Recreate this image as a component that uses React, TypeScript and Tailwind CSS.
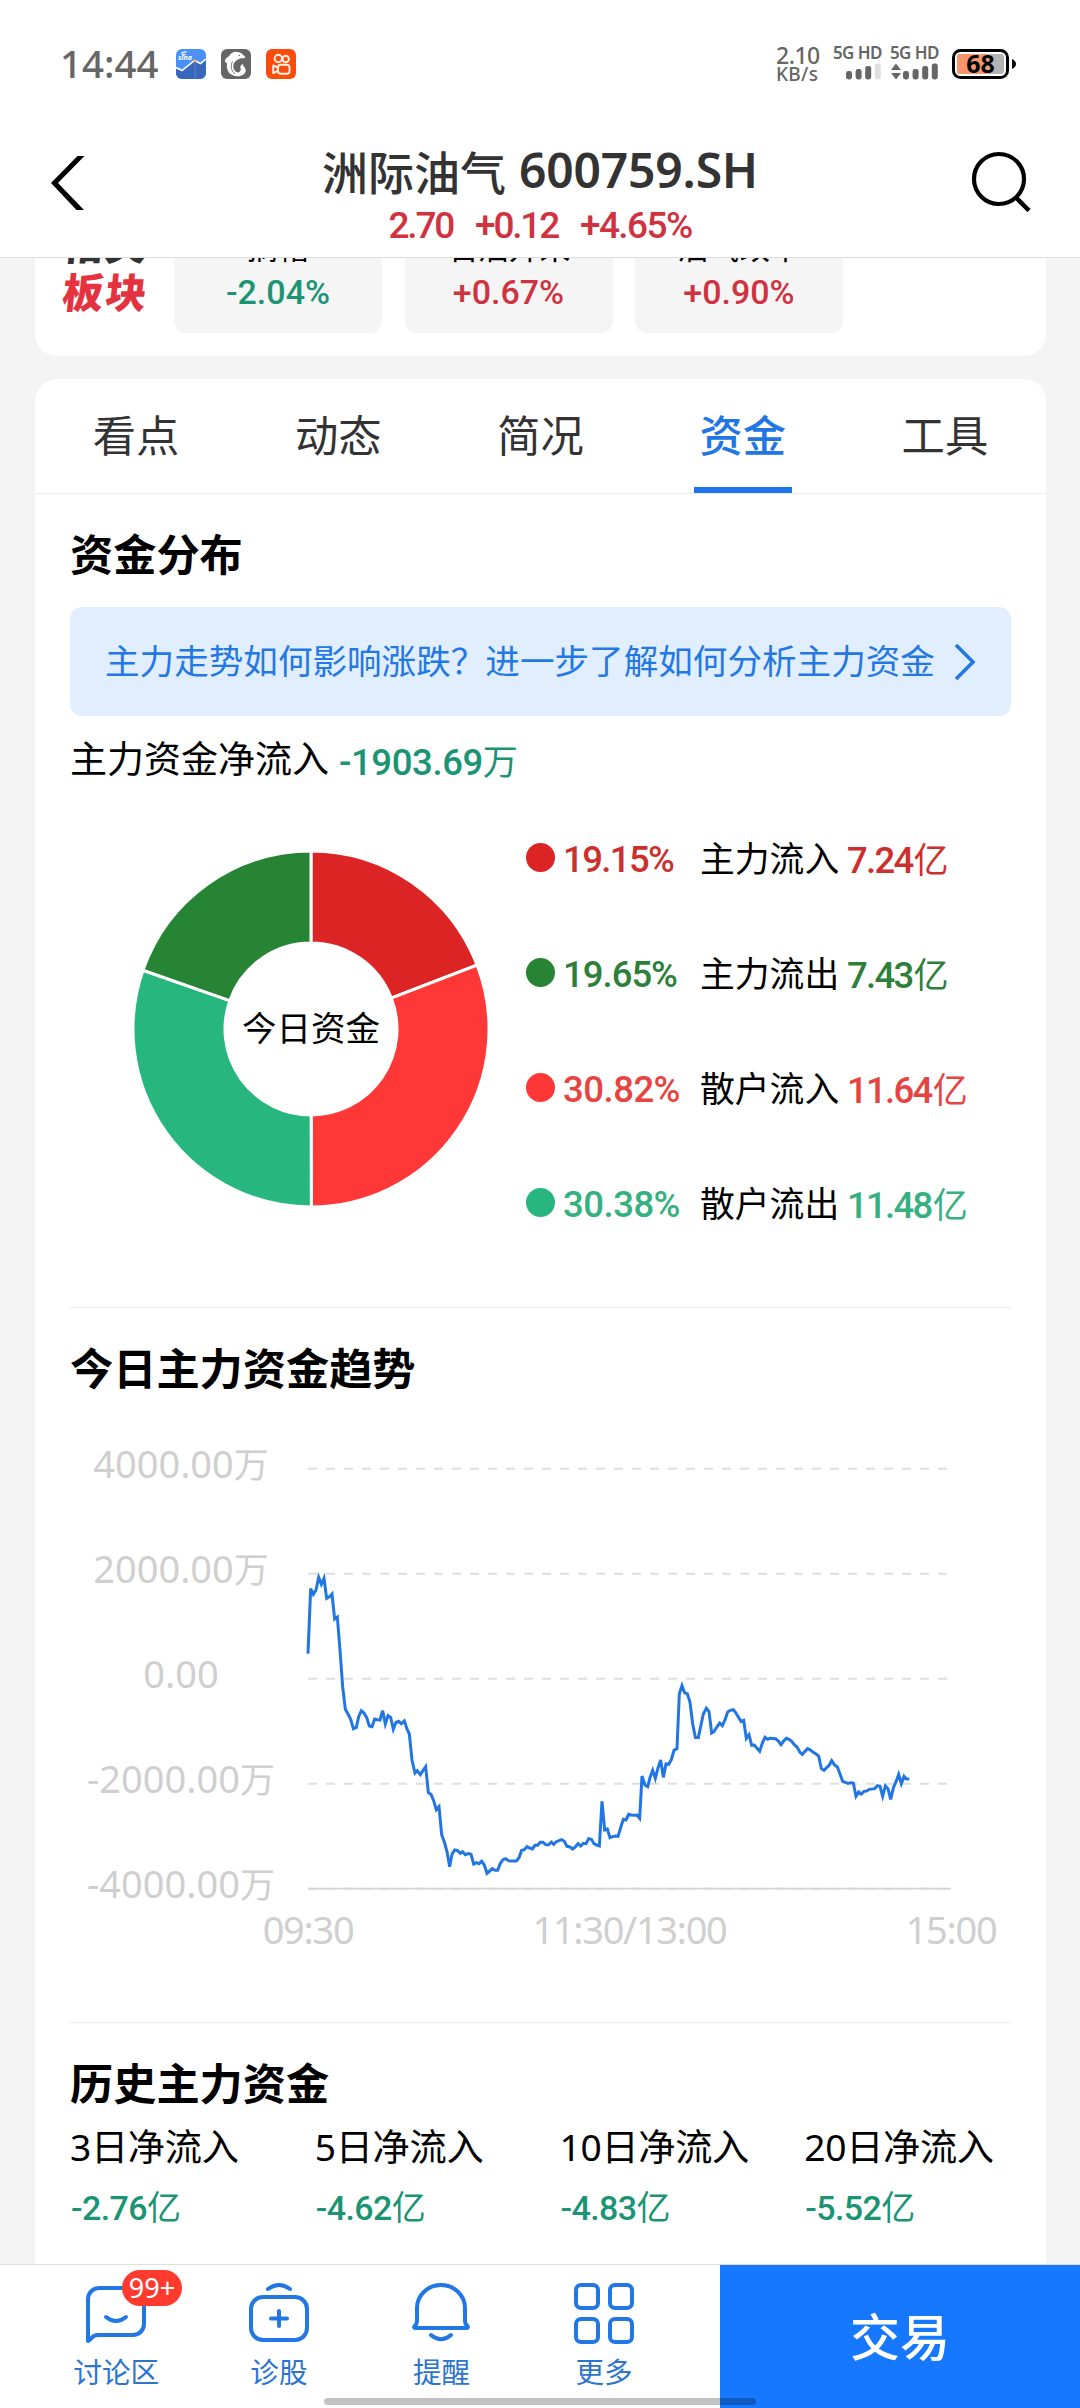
import React from "react";

const CJK = "font-['Noto_Sans_CJK_SC',sans-serif]";
const LATIN = "font-['Noto_Sans','Noto_Sans_CJK_SC',sans-serif]";
const NUM = "font-['Roboto','Noto_Sans_CJK_SC',sans-serif] font-medium";

function SinaIcon() {
  return (
    <svg width="30" height="30" viewBox="0 0 30 30">
      <rect width="30" height="30" rx="6" fill="#4b8ff8" />
      <path d="M0 18.500L6 21.500L18.500 11.500L24.500 14.500L30 10V24a6 6 0 0 1-6 6H6a6 6 0 0 1-6-6Z" fill="#3868bd" />
      <path d="M0 18.500L6 21.500L18.500 11.500L24.500 14.500L30 10" fill="none" stroke="#fff" strokeWidth="1.600" />
      <path d="M19 0V30" stroke="#6f8fd0" strokeWidth="0.700" />
      <circle cx="19" cy="11.500" r="1.400" fill="#f3a04a" />
      <path d="M5.500 4.500q1.500-2 5-1.500M6 6.200q2-1.800 3.500 0" fill="none" stroke="#fff" strokeWidth="1.300" />
      <text x="2" y="10.500" fontSize="7" fontStyle="italic" fontWeight="700" fill="#fff" fontFamily="Noto Sans">sina</text>
    </svg>
  );
}

function DolphinIcon() {
  return (
    <svg width="30" height="30" viewBox="0 0 30 30">
      <rect width="30" height="30" rx="6" fill="#666" />
      <path d="M3.800 12.500C4 9 7 8.500 8.500 6.500C10.500 3.200 14.500 2 18 3.300C21 4 21.500 6 24.300 7.600C24.500 9.300 22 9.500 19.500 9.300C17 10.500 13.500 12 12.500 15.500C11.700 19 13.500 22.500 16.500 23.500C18.500 23.500 19.500 22 20 20.500C18.500 18.500 19.500 16.500 21.500 14.800C21.500 17 24.800 18.500 24.800 21.500C24 26 19.500 27.600 15.500 27.300C8.500 26.300 5 21.500 6 14.500Z" fill="#fff" />
      <path d="M11.500 12.500C9.300 17 10 21.500 14 25" fill="none" stroke="#666" strokeWidth="0.900" />
      <circle cx="18.500" cy="6.500" r="0.700" fill="#666" />
    </svg>
  );
}

function KuaishouIcon() {
  return (
    <svg width="30" height="30" viewBox="0 0 30 30" fill="none" stroke="#fff1e6" strokeWidth="1.900">
      <rect width="30" height="30" rx="6" fill="#fb4c0c" stroke="none" />
      <circle cx="12.300" cy="9.500" r="3.700" />
      <circle cx="19.700" cy="10" r="3.200" />
      <rect x="12" y="15.800" width="11.500" height="9" rx="2.800" />
      <path d="M12 18.500L7.200 16.500V24L12 22Z" strokeLinejoin="round" />
    </svg>
  );
}

function Signal({ x, faded }: { x: number; faded?: boolean }) {
  const tops = [8, 6, 3, 0.500];
  return (
    <>
      {tops.map((t, i) => (
        <rect key={i} x={x + i * 9.600} y={t} width="6" height={16.500 - t} rx="2.400" fill={faded && i === 3 ? "#e0e0e0" : "#666"} />
      ))}
    </>
  );
}

function StatusBar() {
  return (
    <div className="flex h-[128px] items-start justify-between pl-[60px] pr-[64px] pt-[38px] text-[#666]">
      <div className="flex">
        <div className={`${LATIN} w-[116px] text-[38.5px] font-medium leading-[50px]`}>14:44</div>
        <div className="flex gap-[15px] pt-[11px]">
          <SinaIcon />
          <DolphinIcon />
          <KuaishouIcon />
        </div>
      </div>
      <div className="flex">
        <div className={`${LATIN} mr-[13px] mt-[7px] w-[44px] font-medium`}>
          <div className="text-[23px] leading-[20px] tracking-[-0.5px]">2.10</div>
          <div className="text-[19px] leading-[19px] tracking-[0.3px]">KB/s</div>
        </div>
        <div className="mr-[9px] w-[48px] pt-[7px]">
          <div className={`${LATIN} whitespace-nowrap text-[17px] font-semibold leading-[16px] tracking-[-0.6px]`}>5G HD</div>
          <svg className="mt-[2px]" width="48" height="17" viewBox="0 0 48 17"><Signal x={13} faded /></svg>
        </div>
        <div className="mr-[14px] w-[48px] pt-[7px]">
          <div className={`${LATIN} whitespace-nowrap text-[17px] font-semibold leading-[16px] tracking-[-0.6px]`}>5G HD</div>
          <svg className="mt-[2px]" width="48" height="17" viewBox="0 0 48 17">
            <path d="M1 7L6 0.500L11 7ZM1 10L6 16.500L11 10Z" fill="#666" />
            <Signal x={13} />
          </svg>
        </div>
        <div className="relative mt-[11px] h-[30px] w-[64px]">
          <svg width="64" height="30" viewBox="0 0 64 30">
            <rect x="1.500" y="1.500" width="54" height="27" rx="7" fill="#fff" stroke="#000" strokeWidth="3" />
            <rect x="5" y="5" width="47" height="20" rx="3" fill="#b4b4b4" />
            <path d="M8 5H36V25H8a3 3 0 0 1-3-3V8a3 3 0 0 1 3-3Z" fill="#f7966c" />
            <path d="M60 10q4 2 4 5t-4 5Z" fill="#000" />
          </svg>
          <span className={`${LATIN} absolute left-0 top-0 w-[57px] text-center text-[25px] font-bold leading-[29px] text-black`}>68</span>
        </div>
      </div>
    </div>
  );
}

function Header() {
  return (
    <header className="h-[258px] border-b border-[#dcdcdc] bg-white">
      <StatusBar />
      <div className="flex items-start justify-between pl-[50px] pr-[49px]">
        <svg className="mr-[23px] mt-[28px]" width="36" height="54" viewBox="0 0 36 54">
          <path d="M34.500 0H27.500L1 27L26.500 54H34L8 27Z" fill="#000" />
        </svg>
        <div className="mt-[14px] text-center">
          <div className="flex h-[56px] justify-center whitespace-pre text-[#333]">
            <span className={`${CJK} text-[46px] font-medium leading-[56px]`}>洲际油气</span>
            <span className={`${LATIN} ml-[13px] text-[48px] font-semibold leading-[56px] tracking-[-0.2px]`}>600759.SH</span>
          </div>
          <div className={`${NUM} mt-[8px] flex justify-center gap-[22px] text-[37px] leading-[40px] text-[#d0323f]`}>
            <span className="tracking-[-2.2px]">2.70</span>
            <span className="tracking-[-2.2px]">+0.12</span>
            <span className="tracking-[-1.6px]">+4.65%</span>
          </div>
        </div>
        <svg className="mt-[23px]" width="60" height="61" viewBox="0 0 60 61" fill="none" stroke="#000">
          <circle cx="28" cy="28" r="25" strokeWidth="4.200" />
          <path d="M45 46.500L58 59.500" strokeWidth="4.500" />
        </svg>
      </div>
    </header>
  );
}

const sectors = [
  { name: "摘帽", change: "-2.04%", color: "text-[#1b9474]" },
  { name: "石油开采", change: "+0.67%", color: "text-[#cf333f]" },
  { name: "油气改革", change: "+0.90%", color: "text-[#cf333f]" },
];

function SectorCard() {
  return (
    <section className="h-[98px] overflow-hidden rounded-b-[22px] bg-white">
      <div className="mt-[-48px] flex pl-[28px]">
        <div className={`${CJK} mr-[20px] mt-[10px] w-[91px] whitespace-nowrap text-[41px] font-black tracking-[2px]`}>
          <div className="-skew-x-6 leading-[44px] text-[#333]">相关</div>
          <div className="-skew-x-6 leading-[52px] text-[#e5323f]">板块</div>
        </div>
        <div className="flex gap-[22.5px]">
          {sectors.map((s) => (
            <div key={s.name} className="h-[123px] w-[208px] rounded-[12px] bg-[#f5f5f5] pt-[16px] text-center">
              <div className={`${CJK} text-[31px] leading-[40px] text-black`}>{s.name}</div>
              <div className={`${NUM} mt-[6px] text-[34px] leading-[40px] ${s.color}`}>{s.change}</div>
            </div>
          ))}
        </div>
      </div>
    </section>
  );
}

const tabs = ["看点", "动态", "简况", "资金", "工具"];

function Tabs() {
  return (
    <nav className="grid h-[115px] grid-cols-5 border-b border-[#ececec]">
      {tabs.map((t) => {
        const on = t === "资金";
        return (
          <div key={t} className="flex flex-col items-center justify-between">
            <span className={`${CJK} text-[43.3px] leading-[108px] ${on ? "font-medium text-[#2176e6]" : "text-[#333]"}`}>{t}</span>
            {on && <span className="h-[6px] w-[98px] bg-[#1e76ee]" />}
          </div>
        );
      })}
    </nav>
  );
}

function SectionTitle({ children }: { children: React.ReactNode }) {
  return <h2 className={`${CJK} mt-[36px] text-[43.2px] font-bold leading-[44px] text-black`}>{children}</h2>;
}

const legend = [
  { pct: "19.15%", label: "主力流入", value: "7.24", dot: "bg-[#dd2425]", text: "text-[#cc302e]", fit: "tracking-[-1.6px]" },
  { pct: "19.65%", label: "主力流出", value: "7.43", dot: "bg-[#278435]", text: "text-[#2d7f3a]", fit: "tracking-[-1px]" },
  { pct: "30.82%", label: "散户流入", value: "11.64", dot: "bg-[#ff3737]", text: "text-[#e64341]", fit: "tracking-[-0.5px]" },
  { pct: "30.38%", label: "散户流出", value: "11.48", dot: "bg-[#27b67e]", text: "text-[#35b081]", fit: "tracking-[-0.5px]" },
];

const slices = [
  { value: 19.15, color: "#dd2425" },
  { value: 30.82, color: "#ff3737" },
  { value: 30.38, color: "#27b67e" },
  { value: 19.65, color: "#278435" },
];

function Donut() {
  const R = 178;
  const r = 86;
  let acc = 0;
  return (
    <div className="relative mb-[2px] h-[354px] w-[354px]">
      <svg width="354" height="354" viewBox="-177 -177 354 354" overflow="visible" stroke="#fff" strokeWidth="3">
        {slices.map((s) => {
          const a0 = (acc / 100) * Math.PI * 2;
          acc += s.value;
          const a1 = (acc / 100) * Math.PI * 2;
          const p = (a: number, q: number) => `${(Math.sin(a) * q).toFixed(2)} ${(-Math.cos(a) * q).toFixed(2)}`;
          return (
            <path key={s.color} fill={s.color} d={`M${p(a0, R)}A${R} ${R} 0 0 1 ${p(a1, R)}L${p(a1, r)}A${r} ${r} 0 0 0 ${p(a0, r)}Z`} />
          );
        })}
      </svg>
      <div className={`${CJK} absolute inset-0 flex items-center justify-center pb-[4px] text-[34.5px] text-black`}>今日资金</div>
    </div>
  );
}

function Distribution() {
  return (
    <>
      <a className={`${CJK} mt-[33px] flex h-[109px] items-center rounded-[12px] bg-[#e1eeff] pl-[35px] text-[34.6px] text-[#2478e4]`}>
        <span className="whitespace-nowrap pb-[5px] leading-[50px]">主力走势如何影响涨跌？进一步了解如何分析主力资金</span>
        <svg className="ml-[19px]" width="22" height="36" viewBox="0 0 22 36" fill="none" stroke="#2478e4" strokeWidth="3.600">
          <path d="M2 1L19 18L2 35" />
        </svg>
      </a>
      <div className="mt-[16px] flex h-[50px] whitespace-nowrap leading-[50px]">
        <span className={`${CJK} text-[37px] text-black`}>主力资金净流入</span>
        <span className={`${NUM} ml-[10px] mt-[3px] text-[36.5px] tracking-[-0.4px] text-[#1b9474]`}>
          -1903.69<span className={`${CJK} text-[35px] font-normal`}>万</span>
        </span>
      </div>
      <div className="mt-[18px] flex h-[460px] items-center pl-[64px]">
        <Donut />
        <div className="ml-[38px]">
          {legend.map((l) => (
            <div key={l.pct} className="flex h-[115px] items-center whitespace-nowrap leading-[50px]">
              <span className={`size-[29px] rounded-full ${l.dot}`} />
              <span className={`${NUM} ml-[8px] w-[137px] pt-[4px] text-[36.5px] ${l.fit} ${l.text}`}>{l.pct}</span>
              <span className={`${CJK} w-[147px] pb-[1px] text-[34.8px] text-black`}>{l.label}</span>
              <span className={`${NUM} pt-[3px] text-[36.5px] tracking-[-1.7px] ${l.text}`}>
                {l.value}
                <span className={`${CJK} ml-[1px] text-[35px] font-normal`}>亿</span>
              </span>
            </div>
          ))}
        </div>
      </div>
    </>
  );
}

const yLabels = ["4000.00万", "2000.00万", "0.00", "-2000.00万", "-4000.00万"];
const xLabels = ["09:30", "11:30/13:00", "15:00"];

/* Net inflow by minute; one chart pixel is three units. */
const trend =
  "84,341 92,146 100,163 108,150 116,112 124,133 132,115 140,175 149,170 156,162 164,237 172,231 180,330 188,440 196,508 204,522 212,538 220,566 229,562 236,530 244,512 252,519 260,533 268,558 276,560 284,537 292,539 300,540 308,512 316,552 324,527 332,532 340,568 348,547 356,544 364,551 373,543 381,567 388,582 396,660 405,699 412,692 421,704 430,690 437,680 445,758 453,763 461,782 469,809 477,800 485,884 493,906 501,935 509,980 516,943 524,930 533,932 541,940 548,935 556,944 565,941 573,943 581,972 589,968 597,971 605,964 613,975 621,1000 629,993 637,986 645,991 653,991 661,970 669,959 677,956 685,962 693,963 709,963 717,953 725,931 733,929 741,920 749,924 757,927 765,916 773,916 781,907 789,907 797,914 805,915 814,906 821,913 829,905 837,902 845,899 853,904 861,919 870,921 878,927 886,921 894,911 902,918 910,910 918,911 926,896 934,898 942,911 950,915 958,918 966,784 974,870 982,867 990,893 998,890 1006,888 1014,889 1022,863 1030,838 1038,840 1046,823 1054,825 1063,826 1071,825 1079,835 1086,708 1095,735 1103,740 1110,713 1118,691 1126,715 1134,684 1142,660 1150,712 1158,672 1166,673 1174,659 1182,631 1191,626 1198,461 1206,437 1214,459 1222,461 1230,487 1238,551 1246,592 1255,593 1263,555 1270,522 1279,505 1287,515 1295,579 1302,575 1310,562 1319,549 1327,557 1335,540 1343,516 1351,511 1360,509 1367,518 1375,531 1383,544 1391,541 1399,595 1407,584 1415,616 1423,615 1431,625 1439,634 1447,609 1455,592 1463,598 1470,595 1487,596 1495,603 1503,614 1511,603 1519,595 1527,598 1535,604 1543,614 1551,621 1560,637 1567,643 1575,634 1583,626 1591,630 1600,637 1608,642 1616,648 1624,686 1632,691 1640,683 1648,675 1655,662 1663,674 1672,681 1680,702 1688,724 1696,727 1704,730 1712,728 1720,729 1728,769 1736,756 1744,762 1752,754 1760,753 1768,748 1784,746 1792,737 1800,739 1808,769 1816,738 1824,746 1832,778 1840,744 1848,725 1856,703 1864,731 1872,709 1880,717 1888,717";

function TrendChart() {
  return (
    <div className="mt-[23px] flex h-[540px]">
      <div className={`${LATIN} w-[222px] text-center text-[38px] text-[#cfcfcf]`}>
        {yLabels.map((l) => (
          <div key={l} className="h-[105px] leading-[105px]">
            {l.replace("万", "")}
            {l.endsWith("万") && <span className="text-[35px]">万</span>}
          </div>
        ))}
      </div>
      <div className="ml-[16px] w-[643px]">
        <svg className="mt-[56px] block" width="643" height="424" viewBox="84 -219 1929 1272" overflow="visible" fill="none">
          {[-214, 101, 416, 731, 1046].map((y) => (
            <path key={y} d={`M84 ${y}H2004`} stroke="#dedede" strokeWidth="6" strokeDasharray="27 27" />
          ))}
          <path d="M84 1046H2013" stroke="#d4d4d4" strokeWidth="5" />
          <polyline points={trend} stroke="#2276e3" strokeWidth="9" />
        </svg>
        <div className={`${LATIN} mt-[16px] flex justify-between text-[38px] leading-[44px] tracking-[-1.3px] text-[#cfcfcf]`}>
          {xLabels.map((l) => (
            <div key={l} className="flex w-0 justify-center whitespace-nowrap">{l}</div>
          ))}
        </div>
      </div>
    </div>
  );
}

const history = [
  { days: "3", value: "-2.76" },
  { days: "5", value: "-4.62" },
  { days: "10", value: "-4.83" },
  { days: "20", value: "-5.52" },
];

function History() {
  return (
    <div className="mr-[-38px] mt-[22px] flex">
      {history.map((h) => (
        <div key={h.days} className="w-[244.8px] whitespace-nowrap">
          <div className={`${LATIN} h-[44px] text-[37.2px] leading-[44px] tracking-[-0.3px] text-black`}>{h.days}日净流入</div>
          <div className={`${NUM} mt-[17px] h-[40px] pl-[1px] text-[34px] leading-[40px] tracking-[-0.6px] text-[#1b9474]`}>
            {h.value}
            <span className={`${CJK} text-[34px] font-normal`}>亿</span>
          </div>
        </div>
      ))}
    </div>
  );
}

const navItems = [
  {
    label: "讨论区",
    badge: "99+",
    icon: (
      <>
        <path d="M2 55V13A11 11 0 0 1 13 2H47A11 11 0 0 1 58 13V38A11 11 0 0 1 47 49H12Q8 49 5.500 52T2 55Z" transform="translate(0 3)" />
        <path d="M20 34Q30 42 40 34" />
      </>
    ),
  },
  {
    label: "诊股",
    icon: (
      <>
        <rect x="2" y="14" width="56" height="43" rx="12" />
        <path d="M19 6Q30-2 41 6M30 28V43M22 35.500H38" />
      </>
    ),
  },
  {
    label: "提醒",
    icon: (
      <>
        <path d="M6 38V25A24 23 0 0 1 54 25V38Q54 41 56 42.500Q58 45 55.500 45H4.500Q2 45 4 42.500Q6 41 6 38Z" />
        <path d="M20 52Q30 60.500 40 52" />
      </>
    ),
  },
  {
    label: "更多",
    icon: (
      <>
        <rect x="2" y="2" width="22" height="23" rx="5" />
        <rect x="36" y="2" width="22" height="23" rx="5" />
        <rect x="2" y="36" width="22" height="23" rx="5" />
        <rect x="36" y="36" width="22" height="23" rx="5" />
      </>
    ),
  },
];

function BottomBar() {
  return (
    <footer className="relative flex h-[144px] border-t border-[#dedede] bg-white">
      <div className="flex w-[720px] pl-[35px]">
        {navItems.map((n) => (
          <div key={n.label} className="relative flex w-[162.6px] flex-col items-center pt-[18px]">
            <svg width="60" height="61" viewBox="0 0 60 61" overflow="visible" fill="none" stroke="#2377e4" strokeWidth="4" strokeLinecap="round" strokeLinejoin="round">
              {n.icon}
            </svg>
            {n.badge && (
              <span className={`${LATIN} absolute left-[87px] top-[5px] h-[36px] w-[60px] rounded-full bg-[#ff3b30] text-center text-[27px] leading-[36px] text-white`}>
                {n.badge}
              </span>
            )}
            <span className={`${CJK} mt-[11px] text-[28.6px] leading-[32px] text-[#2b74cf]`}>{n.label}</span>
          </div>
        ))}
      </div>
      <button className={`${CJK} w-[360px] bg-[#1677ff] pb-[4px] text-[50px] font-medium leading-[139px] text-white`}>交易</button>
      <div className="absolute bottom-[3px] left-[324px] h-[7px] w-[432px] rounded-full bg-black/24" />
    </footer>
  );
}

export default function App() {
  return (
    <div className="h-[2408px] w-[1080px] overflow-hidden bg-[#f4f4f4]">
      <Header />
      <main className="h-[2006px] overflow-hidden px-[35px]">
        <div className="w-[1011px]">
          <SectorCard />
          <section className="mt-[23px] h-[2000px] rounded-t-[22px] bg-white">
            <Tabs />
            <div className="px-[35px]">
              <SectionTitle>资金分布</SectionTitle>
              <Distribution />
              <div className="mt-[47px] h-px bg-[#ececec]" />
              <SectionTitle>今日主力资金趋势</SectionTitle>
              <TrendChart />
              <div className="mt-[71px] h-px bg-[#ececec]" />
              <SectionTitle>历史主力资金</SectionTitle>
              <History />
            </div>
          </section>
        </div>
      </main>
      <BottomBar />
    </div>
  );
}
